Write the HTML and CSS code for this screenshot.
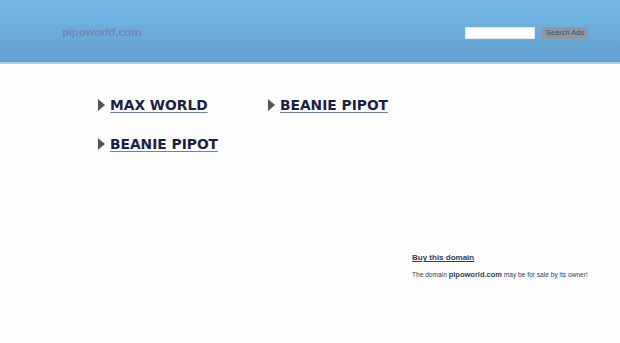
FILE: index.html
```html
<!DOCTYPE html>
<html>
<head>
<meta charset="utf-8">
<link rel="stylesheet" href="styles.css">
</head>
<body>
<header class="top">
  <div class="logo">pipoworld.com</div>
  <form class="search">
    <input class="search-input" type="text">
    <button class="search-btn" type="button">Search Ads</button>
  </form>
</header>
<main class="links">
  <a class="link" href="#"><span class="arrow"></span><span class="txt">MAX WORLD</span></a>
  <a class="link" href="#"><span class="arrow"></span><span class="txt">BEANIE PIPOT</span></a>
  <a class="link" href="#"><span class="arrow"></span><span class="txt">BEANIE PIPOT</span></a>
</main>
<aside class="sale">
  <a class="buy" href="#">Buy this domain</a>
  <p class="note">The domain <b>pipoworld.com</b> may be for sale by its owner!</p>
</aside>
</body>
</html>
```
FILE: styles.css
```css
html, body { margin: 0; padding: 0; background: #fdfdfd; }
body { font-family: "DejaVu Sans", Verdana, sans-serif; width: 620px; height: 343px; overflow: hidden; }
.top {
  height: 62px;
  background: linear-gradient(#74b8e8, #62a0cc);
  border-bottom: 2px solid #a8cfee;
  display: flex;
  align-items: center;
  justify-content: space-between;
  padding: 0 32px 0 62px;
  box-sizing: content-box;
}
.logo {
  font-family: "Liberation Sans", Arial, sans-serif;
  font-weight: bold;
  font-size: 11.5px;
  letter-spacing: -0.2px;
  color: #6f88b2;
  margin-top: 1px;
  filter: blur(0.4px);
}
.search { display: flex; align-items: center; gap: 8px; margin: 4px 0 0; }
.search-input {
  width: 68px; height: 10px; border: none; padding: 0; margin: 0;
  background: #fff; outline: 1px solid #dfeaf3;
}
.search-btn {
  width: 46px; height: 12px; border: none; padding: 0; margin: 0;
  background: #8c98a4; color: #3c4e62;
  font-family: "Liberation Sans", Arial, sans-serif; font-size: 7.5px;
  line-height: 12px;
}
.links {
  display: grid;
  grid-template-columns: 170px 200px;
  row-gap: 23px;
  padding: 33px 0 0 98px;
}
.link { display: flex; align-items: center; gap: 5px; text-decoration: none; }
.arrow {
  width: 0; height: 0;
  border-top: 6px solid transparent; border-bottom: 6px solid transparent;
  border-left: 7px solid #555;
}
.txt {
  font-weight: bold; font-size: 13.8px; color: #1a2244;
  text-decoration: underline; text-decoration-color: #6e82a8;
  text-underline-offset: 2px;
}
.sale { margin: 93px 0 0 412px; }
.buy {
  font-family: "Liberation Sans", Arial, sans-serif;
  font-weight: bold; font-size: 8px; color: #2e3e5c;
  text-decoration: underline;
}
.note {
  font-family: "Liberation Sans", Arial, sans-serif;
  font-size: 6.6px; color: #2e3e5c; margin: 6px 0 0;
}
.note b { font-size: 7.5px; }
```
